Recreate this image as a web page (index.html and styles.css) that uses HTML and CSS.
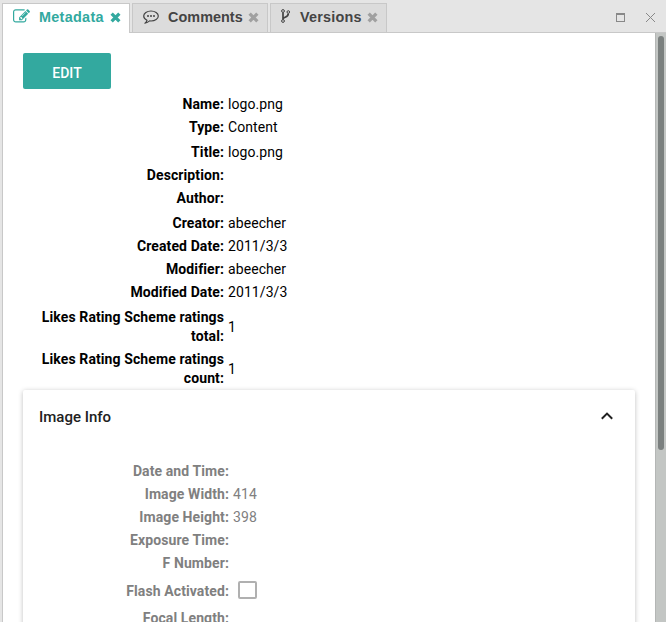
FILE: index.html
```html
<!DOCTYPE html>
<html lang="en">
<head>
<meta charset="utf-8">
<title>Metadata</title>
<link rel="stylesheet" href="styles.css">
</head>
<body>
<div class="window">
  <header class="tabbar">
    <div class="tab active">
      <svg class="icon edit" viewBox="0 0 1792 1792"><path fill="currentColor" d="M888 1184l116-116-152-152-116 116v56h96v96h56zm440-720q-16-16-33 1l-350 350q-17 17-1 33t33-1l350-350q17-17 1-33zm80 594v190q0 119-84.500 203.500t-203.500 84.500h-832q-119 0-203.500-84.500t-84.500-203.500v-832q0-119 84.500-203.500t203.500-84.500h832q63 0 117 25 15 7 18 23 3 17-9 29l-49 49q-14 14-32 8-23-6-45-6h-832q-66 0-113 47t-47 113v832q0 66 47 113t113 47h832q66 0 113-47t47-113v-126q0-13 9-22l64-64q15-15 35-7t20 29zm-96-738l288 288-672 672h-288v-288zm444 132l-92 92-288-288 92-92q28-28 68-28t68 28l152 152q28 28 28 68t-28 68z"/></svg>
      <span class="label">Metadata</span>
      <svg class="close" viewBox="0 0 10 10"><path d="M1.500 1.500l7 7M8.500 1.500l-7 7"/></svg>
    </div>
    <div class="tab comments">
      <svg class="icon chat" viewBox="0 0 16 14"><path d="M4 10.300C2 9.300.7 7.800.7 6 .7 3.200 4 1 8 1s7.300 2.200 7.300 5S12 11 8 11l-1.400-.1C5.200 12.200 3.700 12.900 1.900 13.200 3 12.500 3.800 11.600 4 10.300z" fill="none" stroke="currentColor" stroke-width="1.200" stroke-linejoin="round"/><circle cx="5" cy="6" r="1"/><circle cx="8" cy="6" r="1"/><circle cx="11" cy="6" r="1"/></svg>
      <span class="label">Comments</span>
      <svg class="close" viewBox="0 0 10 10"><path d="M1.500 1.500l7 7M8.500 1.500l-7 7"/></svg>
    </div>
    <div class="tab versions">
      <svg class="icon fork" viewBox="0 0 9 14"><g fill="none" stroke="currentColor"><circle cx="2" cy="2" r="1.400"/><circle cx="2" cy="12" r="1.400"/><circle cx="7.300" cy="3" r="1.300"/><path stroke-width="1.700" d="M2 3.400v7.200M2.200 9.600C3 7.800 7.300 8.500 7.300 4.400"/></g></svg>
      <span class="label">Versions</span>
      <svg class="close" viewBox="0 0 10 10"><path d="M1.500 1.500l7 7M8.500 1.500l-7 7"/></svg>
    </div>
    <div class="controls">
      <span class="maximize"></span>
      <svg class="dismiss" viewBox="0 0 11 11"><path d="M1 1l9 9M10 1l-9 9"/></svg>
    </div>
  </header>
  <div class="body">
    <main class="content">
      <button class="edit-button">EDIT</button>
      <dl class="fields">
        <div class="row"><dt>Name:</dt><dd>logo.png</dd></div>
        <div class="row"><dt>Type:</dt><dd>Content</dd></div>
        <div class="row group"><dt>Title:</dt><dd>logo.png</dd></div>
        <div class="row"><dt>Description:</dt><dd></dd></div>
        <div class="row"><dt>Author:</dt><dd></dd></div>
        <div class="row group"><dt>Creator:</dt><dd>abeecher</dd></div>
        <div class="row"><dt>Created Date:</dt><dd>2011/3/3</dd></div>
        <div class="row"><dt>Modifier:</dt><dd>abeecher</dd></div>
        <div class="row"><dt>Modified Date:</dt><dd>2011/3/3</dd></div>
        <div class="row group"><dt>Likes Rating Scheme ratings total:</dt><dd>1</dd></div>
        <div class="row"><dt>Likes Rating Scheme ratings count:</dt><dd>1</dd></div>
      </dl>
      <section class="card">
        <div class="card-head">
          <h2>Image Info</h2>
          <svg class="chevron" viewBox="0 0 12 8"><path d="M.8 6.800L6 1.600l5.200 5.200"/></svg>
        </div>
        <dl class="fields muted">
          <div class="row"><dt>Date and Time:</dt><dd></dd></div>
          <div class="row"><dt>Image Width:</dt><dd>414</dd></div>
          <div class="row"><dt>Image Height:</dt><dd>398</dd></div>
          <div class="row"><dt>Exposure Time:</dt><dd></dd></div>
          <div class="row"><dt>F Number:</dt><dd></dd></div>
          <div class="row flash"><dt>Flash Activated:</dt><dd><span class="checkbox"></span></dd></div>
          <div class="row"><dt>Focal Length:</dt><dd></dd></div>
        </dl>
      </section>
    </main>
    <div class="scrollbar"><div class="thumb"></div></div>
  </div>
</div>
</body>
</html>
```

FILE: styles.css
```css
* { box-sizing: border-box; }

body {
  margin: 0;
  overflow: hidden;
  background: #e5e5e5;
  font: 14px/19px Roboto, sans-serif;
  color: #000;
}

.window {
  display: flex;
  flex-direction: column;
  height: 622px;
  padding-left: 2px;
}

.tabbar {
  display: flex;
  flex: none;
  height: 33px;
  padding-top: 3px;
  gap: 2px;
  box-shadow: inset 0 -1px #c8c8c8;
}

.tab {
  display: flex;
  align-items: center;
  height: 30px;
  width: 136px;
  padding: 0 8px 2px 10px;
  border: 1px solid #c8c8c8;
  background: #dcdcdc;
  color: #444;
  font: bold 14.4px/19px "Liberation Sans", sans-serif;
}

.tab.active {
  width: 128px;
  border-bottom: 0;
  background: #fff;
  color: #33a99f;
  padding-bottom: 3px;
}

.tab.versions { width: 117px; }

.icon { flex: none; }
.edit { width: 17px; height: 17px; margin-top: -1px; }
.chat { width: 16px; height: 14px; fill: currentColor; }
.fork { width: 9px; height: 14px; margin-top: -2px; }
.label { flex: none; margin-left: 9px; padding-top: 1px; letter-spacing: 0.05px; }
.active .label { letter-spacing: 0.3px; }
.versions .label { margin-left: 10px; letter-spacing: 0.2px; }

.close {
  flex: none;
  width: 11px;
  height: 11px;
  margin-left: auto;
  stroke: #a0a0a0;
  stroke-width: 3;
}

.active .close { stroke: #33a99f; }

.controls {
  display: flex;
  gap: 20px;
  margin: 10px 10px 0 auto;
}

.maximize {
  width: 9px;
  height: 9px;
  border: 1px solid #888;
  border-top-width: 2px;
}

.dismiss {
  width: 11px;
  height: 11px;
  margin-top: -1px;
  stroke: #888;
  stroke-width: 1;
}

.body {
  display: flex;
  flex: 1;
  min-height: 0;
}

.content {
  flex: 1;
  min-width: 0;
  overflow: hidden;
  padding: 20px 20px 0;
  border-left: 1px solid #c8c8c8;
  background: #fff;
}

.edit-button {
  display: block;
  width: 88px;
  height: 36px;
  padding: 5px 0 0;
  border: 0;
  border-radius: 2px;
  background: #33a99f;
  color: #fff;
  font: 500 14px/19px Roboto, sans-serif;
}

.fields { margin: 6px 0 0; }

.row {
  display: grid;
  grid-template-columns: 201px 1fr;
  align-items: center;
  gap: 4px;
  min-height: 19px;
  margin-bottom: 4px;
}

.row.group { margin-top: 6px; }
.row:last-child { margin-bottom: 2px; }
dt { font-weight: 700; text-align: right; letter-spacing: 0.1px; }
dd { margin: 0; letter-spacing: 0.08px; }

.card {
  height: 400px;
  border-radius: 2px;
  background: #fff;
  box-shadow: 0 1px 5px rgba(0, 0, 0, 0.25);
}

.card-head {
  display: flex;
  align-items: center;
  justify-content: space-between;
  height: 53px;
  padding: 0 22px 0 16px;
}

h2 {
  margin: 0;
  padding-top: 2px;
  color: #212121;
  font-size: 15px;
  font-weight: 500;
}

.chevron {
  width: 12px;
  height: 8px;
  margin-bottom: 2px;
  fill: none;
  stroke: #212121;
  stroke-width: 2;
}

.muted {
  margin-top: 19px;
  color: #808080;
}

.muted .row { grid-template-columns: 206px 1fr; }
.muted .flash { height: 28px; }

.checkbox {
  display: block;
  width: 19px;
  height: 18px;
  margin: -2px 0 0 5px;
  border: 2px solid #b0b0b0;
  border-radius: 2px;
}

.scrollbar {
  flex: none;
  width: 11px;
  padding: 3px 2px;
  border-left: 1px solid #b4b6b5;
  background: #c3c6c4;
}

.thumb {
  width: 6px;
  height: 414px;
  border-radius: 3px;
  background: #7b807f;
}
```
